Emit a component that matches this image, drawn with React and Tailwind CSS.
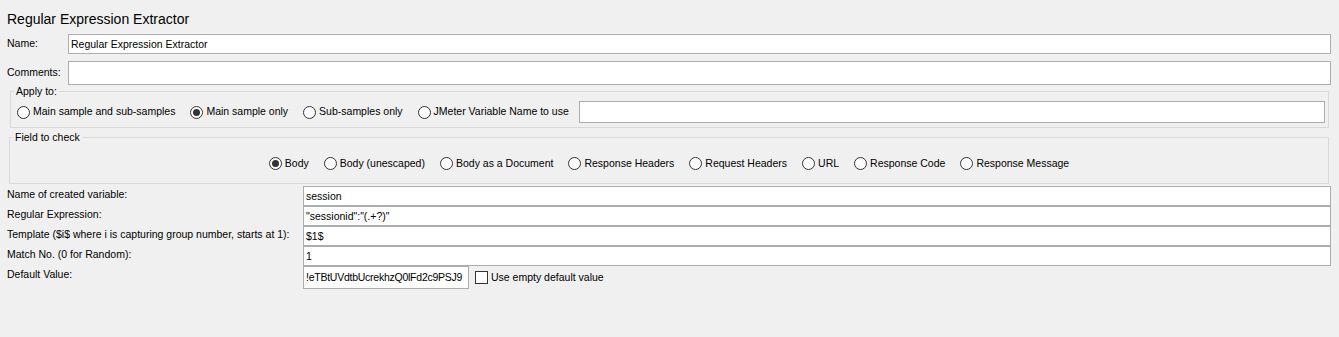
import React from 'react';

const inputCls = 'bg-white border border-[#abadb3] px-[2px] leading-[18px] outline-none';

function Radio({ checked, label }) {
  return (
    <label className="flex items-center whitespace-nowrap">
      <span className="w-[13px] h-[13px] rounded-full border border-[#333333] bg-white flex items-center justify-center shrink-0">
        {checked && <span className="w-[7px] h-[7px] rounded-full bg-[#333333]" />}
      </span>
      <span className="ml-[3px]">{label}</span>
    </label>
  );
}

function Row({ label, children }) {
  return (
    <div className="flex items-start">
      <div className="w-[296px] shrink-0 pt-[1px] leading-[14px]">{label}</div>
      {children}
    </div>
  );
}

export default function App() {
  const applyTo = [
    { label: 'Main sample and sub-samples' },
    { label: 'Main sample only', checked: true },
    { label: 'Sub-samples only' },
    { label: 'JMeter Variable Name to use' },
  ];
  const fields = [
    { label: 'Body', checked: true },
    { label: 'Body (unescaped)' },
    { label: 'Body as a Document' },
    { label: 'Response Headers' },
    { label: 'Request Headers' },
    { label: 'URL' },
    { label: 'Response Code' },
    { label: 'Response Message' },
  ];

  return (
    <div className="min-h-screen w-full bg-[#f0f0f0] text-black font-['Liberation_Sans',Arial,sans-serif] text-[10.5px]">
      <div className="pl-[7px] pr-[8px] pt-[11px]">
        <h1 className="text-[14px] leading-[17px] font-normal">Regular Expression Extractor</h1>

        <div className="mt-[6px] flex items-center">
          <span className="w-[61px] shrink-0">Name:</span>
          <div className={`flex-1 h-[20px] ${inputCls}`}>Regular Expression Extractor</div>
        </div>

        <div className="mt-[7px] flex items-center">
          <span className="w-[61px] shrink-0">Comments:</span>
          <div className={`flex-1 h-[24px] ${inputCls}`}></div>
        </div>
      </div>

      {/* Apply to */}
      <fieldset className="ml-[10px] mr-[10px] border border-[#d9d9d9]">
        <legend className="ml-[3px] px-[2px] leading-[13px]">Apply to:</legend>
        <div className="flex items-center h-[22px] pl-[6px] pr-[3px] pt-[3px] pb-[4px] box-content">
          <div className="flex items-center gap-[15px]">
            {applyTo.map((r) => (
              <Radio key={r.label} {...r} />
            ))}
          </div>
          <div className={`ml-[10px] flex-1 h-[22px] ${inputCls}`}></div>
        </div>
      </fieldset>

      {/* Field to check */}
      <fieldset className="mt-[3px] ml-[9px] mr-[10px] border border-[#d9d9d9]">
        <legend className="ml-[3px] px-[2px] leading-[13px]">Field to check</legend>
        <div className="flex items-center justify-center gap-[15px] h-[39px]">
          {fields.map((r) => (
            <Radio key={r.label} {...r} />
          ))}
        </div>
      </fieldset>

      <div className="mt-[2px] pl-[7px] pr-[8px]">
        <Row label="Name of created variable:">
          <div className={`flex-1 h-[20px] ${inputCls}`}>session</div>
        </Row>
        <Row label="Regular Expression:">
          <div className={`flex-1 h-[20px] ${inputCls}`}>"sessionid":"(.+?)"</div>
        </Row>
        <Row label="Template ($i$ where i is capturing group number, starts at 1):">
          <div className={`flex-1 h-[20px] ${inputCls}`}>$1$</div>
        </Row>
        <Row label="Match No. (0 for Random):">
          <div className={`flex-1 h-[20px] ${inputCls}`}>1</div>
        </Row>
        <Row label="Default Value:">
          <div className="flex items-center">
            <div className={`w-[166px] h-[23px] overflow-hidden whitespace-nowrap leading-[21px] tracking-[-0.25px] ${inputCls}`}>!eTBtUVdtbUcrekhzQ0lFd2c9PSJ9</div>
            <span className="ml-[6px] w-[13px] h-[13px] border border-[#333333] bg-white shrink-0" />
            <span className="ml-[3px]">Use empty default value</span>
          </div>
        </Row>
      </div>
    </div>
  );
}
